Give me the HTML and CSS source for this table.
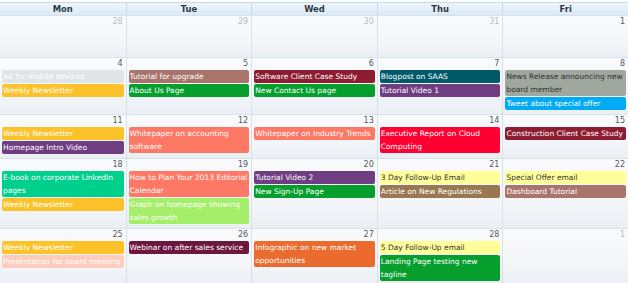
FILE: index.html
```html
<!DOCTYPE html>
<html>
<head>
<meta charset="utf-8">
<link rel="stylesheet" href="styles.css">
</head>
<body>
<div class="cal">
  <div class="head">
    <div class="hd">Mon</div><div class="hd">Tue</div><div class="hd">Wed</div><div class="hd">Thu</div><div class="hd">Fri</div>
  </div>
  <div class="week">
    <div class="day"><div class="num other">28</div></div>
    <div class="day"><div class="num other">29</div></div>
    <div class="day"><div class="num other">30</div></div>
    <div class="day"><div class="num other">31</div></div>
    <div class="day"><div class="num">1</div></div>
  </div>
  <div class="week">
    <div class="day"><div class="num">4</div>
      <div class="ev ad">Ad for mobile devices</div>
      <div class="ev amber">Weekly Newsletter</div></div>
    <div class="day"><div class="num">5</div>
      <div class="ev rose">Tutorial for upgrade</div>
      <div class="ev green">About Us Page</div></div>
    <div class="day"><div class="num">6</div>
      <div class="ev crimson">Software Client Case Study</div>
      <div class="ev green">New Contact Us page</div></div>
    <div class="day"><div class="num">7</div>
      <div class="ev teal">Blogpost on SAAS</div>
      <div class="ev purple">Tutorial Video 1</div></div>
    <div class="day"><div class="num">8</div>
      <div class="ev gray">News Release announcing new board member</div>
      <div class="ev sky">Tweet about special offer</div></div>
  </div>
  <div class="week">
    <div class="day"><div class="num">11</div>
      <div class="ev amber">Weekly Newsletter</div>
      <div class="ev purple">Homepage Intro Video</div></div>
    <div class="day"><div class="num">12</div>
      <div class="ev salmon">Whitepaper on accounting software</div></div>
    <div class="day"><div class="num">13</div>
      <div class="ev salmon">Whitepaper on Industry Trends</div></div>
    <div class="day"><div class="num">14</div>
      <div class="ev red">Executive Report on Cloud Computing</div></div>
    <div class="day"><div class="num">15</div>
      <div class="ev crimson">Construction Client Case Study</div></div>
  </div>
  <div class="week">
    <div class="day"><div class="num">18</div>
      <div class="ev mint">E-book on corporate LinkedIn pages</div>
      <div class="ev amber">Weekly Newsletter</div></div>
    <div class="day"><div class="num">19</div>
      <div class="ev salmon">How to Plan Your 2013 Editorial Calendar</div>
      <div class="ev lime">Graph on homepage showing sales growth</div></div>
    <div class="day"><div class="num">20</div>
      <div class="ev purple">Tutorial Video 2</div>
      <div class="ev green">New Sign-Up Page</div></div>
    <div class="day"><div class="num">21</div>
      <div class="ev yellow">3 Day Follow-Up Email</div>
      <div class="ev brown">Article on New Regulations</div></div>
    <div class="day"><div class="num">22</div>
      <div class="ev yellow">Special Offer email</div>
      <div class="ev rose">Dashboard Tutorial</div></div>
  </div>
  <div class="week">
    <div class="day"><div class="num">25</div>
      <div class="ev amber">Weekly Newsletter</div>
      <div class="ev pink">Presentation for board meeting</div></div>
    <div class="day"><div class="num">26</div>
      <div class="ev maroon">Webinar on after sales service</div></div>
    <div class="day"><div class="num">27</div>
      <div class="ev orange">Infographic on new market opportunities</div></div>
    <div class="day"><div class="num">28</div>
      <div class="ev yellow">5 Day Follow-Up email</div>
      <div class="ev green">Landing Page testing new tagline</div></div>
    <div class="day"><div class="num other">1</div></div>
  </div>
</div>
</body>
</html>
```
FILE: styles.css
```css
html, body {
  margin: 0;
  padding: 0;
  background: #ffffff;
}
body {
  font-family: "DejaVu Sans", Verdana, sans-serif;
  width: 628px;
  overflow: hidden;
}
.cal {
  padding-top: 2px;
}
.head {
  display: grid;
  grid-template-columns: repeat(5, 1fr);
  border-top: 1px solid #c5dbec;
  background: linear-gradient(#eef5fb, #d9e9f7);
}
.hd {
  height: 12px;
  line-height: 12px;
  text-align: center;
  font-weight: bold;
  font-size: 8.4px;
  color: #2b3a48;
  border-left: 1px solid #c5dbec;
}
.hd:first-child {
  border-left: none;
}
.week {
  display: grid;
  grid-template-columns: repeat(5, 1fr);
  border-top: 1px solid #d9e1e8;
}
.day {
  min-height: 41px;
  padding-bottom: 3px;
  box-sizing: border-box;
  border-left: 1px solid #d9e1e8;
  background: linear-gradient(#f9fafc 0%, #f4f6f9 60%, #eaeff3 100%);
}
.day:first-child {
  border-left: none;
}
.num {
  height: 12px;
  line-height: 12px;
  padding-right: 3px;
  text-align: right;
  font-size: 8px;
  color: #555a5f;
}
.num.other {
  color: #b9bcbf;
}
.ev {
  margin: 0 2px 1px 2px;
  padding: 0 1px;
  line-height: 13px;
  font-size: 7.5px;
  color: #ffffff;
  border-radius: 2px;
}
.ad { background: #dfe4e8; }
.amber { background: #fdc22a; }
.rose { background: #a9746b; }
.green { background: #069f2e; }
.crimson { background: #8d1c30; }
.teal { background: #005a6a; }
.purple { background: #6e3d82; }
.gray { background: #a0a79f; color: #2e3233; }
.sky { background: #00aaf5; }
.salmon { background: #fe7866; }
.red { background: #ff0033; }
.mint { background: #00d08c; }
.lime { background: #a4ee6a; }
.yellow { background: #ffff99; color: #333333; }
.brown { background: #997850; }
.maroon { background: #6d1640; }
.orange { background: #ea6b2d; }
.pink { background: #ffcbbd; }
```
